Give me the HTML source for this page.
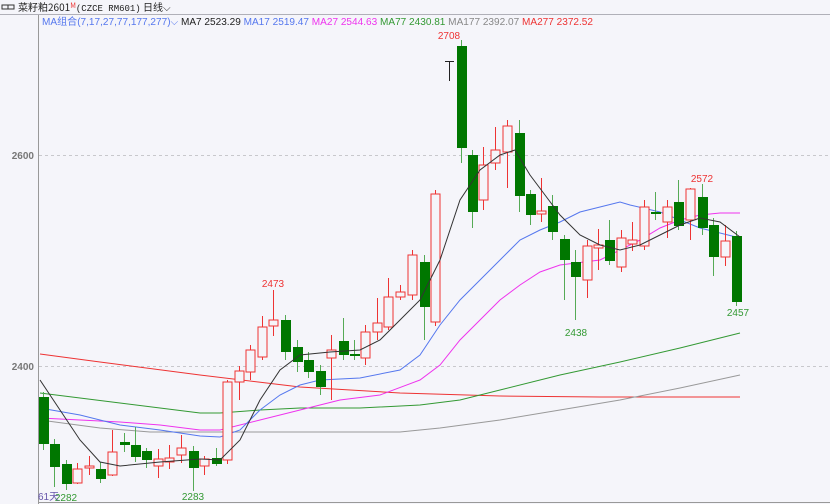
<!DOCTYPE html>
<html><head><meta charset="utf-8"><style>
html,body{margin:0;padding:0;width:830px;height:504px;overflow:hidden;background:#f5f5fa;font-family:"Liberation Sans","Noto Sans CJK SC",sans-serif}
</style></head><body>
<svg id="s" width="830" height="504" xmlns="http://www.w3.org/2000/svg" style="position:absolute;left:0;top:0">
<rect x="0" y="0" width="830" height="504" fill="#f5f5fa"/>
<line x1="0" y1="14.5" x2="830" y2="14.5" stroke="#b0b0b8" stroke-width="1"/>
<rect x="2" y="5" width="6" height="4" fill="none" stroke="#333"/><rect x="8" y="5" width="6" height="4" fill="none" stroke="#333"/>
<text x="18" y="11" font-size="10" fill="#222" font-family="'Noto Sans CJK SC',sans-serif">菜籽粕2601<tspan fill="#e33" font-size="7" dy="-3">M</tspan><tspan dy="3" font-family="'Liberation Mono',monospace" font-size="9">(CZCE RM601)</tspan> 日线⌵</text>
<line x1="38.5" y1="15" x2="38.5" y2="504" stroke="#999" stroke-width="1"/>
<line x1="38" y1="502.5" x2="830" y2="502.5" stroke="#999" stroke-width="1"/>
<line x1="39" y1="155.5" x2="830" y2="155.5" stroke="#c8c8cc" stroke-dasharray="3,3"/>
<line x1="39" y1="366.5" x2="830" y2="366.5" stroke="#c8c8cc" stroke-dasharray="3,3"/>
<text x="34" y="159" font-size="10" fill="#777" text-anchor="end" font-weight="bold">2600</text>
<text x="34" y="370" font-size="10" fill="#777" text-anchor="end" font-weight="bold">2400</text>
<text x="42" y="25" font-size="10" textLength="551" lengthAdjust="spacingAndGlyphs"><tspan fill="#5577ee">MA组合(7,17,27,77,177,277)⌵ </tspan><tspan fill="#222"> MA7 2523.29 </tspan><tspan fill="#5577ee"> MA17 2519.47 </tspan><tspan fill="#ee33ee"> MA27 2544.63 </tspan><tspan fill="#339933"> MA77 2430.81 </tspan><tspan fill="#888"> MA177 2392.07 </tspan><tspan fill="#ee3333"> MA277 2372.52</tspan></text>
<g id="c"></g>
<text x="449" y="39" font-size="10" fill="#ee3333" text-anchor="middle">2708</text>
<text x="273" y="287" font-size="10" fill="#ee3333" text-anchor="middle">2473</text>
<text x="576" y="336" font-size="10" fill="#339933" text-anchor="middle">2438</text>
<text x="738" y="316" font-size="10" fill="#339933" text-anchor="middle">2457</text>
<text x="702" y="182" font-size="10" fill="#ee3333" text-anchor="middle">2572</text>
<text x="66" y="501" font-size="10" fill="#339933" text-anchor="middle">2282</text>
<text x="193" y="500" font-size="10" fill="#339933" text-anchor="middle">2283</text>
<text x="38" y="500" font-size="10" fill="#6655aa">61天</text>
</svg>
<script>
var d=[
[43,'g',397,444,392,450],[54,'g',444,467,439,487],[66,'g',464,484,460,490],[77,'r',469,483,463,484],[89,'r',466,468,456,475],[100,'g',469,479,462,483],[112,'r',452,475,430,476],[124,'g',442,445,433,452],[135,'g',445,457,427,462],[146,'g',451,460,448,468],[158,'r',459,466,449,478],[169,'r',458,462,445,469],[181,'r',448,455,435,463],[193,'g',451,468,446,491],[204,'r',459,466,456,475],[216,'g',458,464,448,466],[227,'r',382,460,380,464],[239,'r',371,382,366,400],[250,'r',350,372,345,380],[262,'r',327,357,316,360],[273,'r',320,326,290,336],[285,'g',320,352,315,360],[297,'g',347,362,340,372],[308,'g',360,372,352,378],[320,'g',371,387,365,395],[331,'r',350,358,335,400],[343,'g',341,355,318,360],[354,'g',354,356,340,360],[365,'r',332,358,325,365],[377,'r',323,332,298,340],[388,'r',297,327,278,330],[400,'r',292,297,285,300],[412,'r',255,295,250,300],[424,'g',262,307,255,340],[435,'r',194,322,190,326],[449,'k',61,62,61,81],[461,'g',46,148,40,163],[472,'g',155,212,150,228],[483,'r',165,200,147,210],[495,'r',150,163,127,170],[507,'r',126,152,120,188],[519,'g',133,196,120,212],[530,'g',194,215,190,225],[541,'r',211,214,178,222],[552,'g',206,232,195,240],[564,'g',239,260,235,300],[575,'g',262,277,250,320],[587,'r',246,280,240,298],[598,'r',245,248,229,270],[609,'g',240,261,220,265],[621,'r',238,267,230,272],[632,'r',240,244,222,251],[644,'r',207,246,200,250],[655,'g',212,214,192,220],[667,'r',207,222,200,238],[678,'g',202,226,180,230],[690,'r',189,220,188,240],[702,'g',197,228,184,235],[713,'g',225,257,218,276],[725,'r',241,257,225,266],[736,'g',236,302,231,306]];
var h='';
function pl(p,c,w){var s='';for(var i=0;i<p.length;i+=2)s+=p[i]+','+p[i+1]+' ';return '<polyline points="'+s+'" fill="none" stroke="'+c+'" stroke-width="'+(w||1)+'"/>';}
h+=pl([40,354,100,362,200,375,300,387,400,393,500,396,600,397,740,397],'#ee3333');
h+=pl([40,420,100,428,150,432,200,432,260,432,320,432,400,432,440,428,500,420,560,410,620,400,680,388,740,375],'#999');
h+=pl([40,393,80,398,120,403,160,408,200,413,220,413,260,410,300,408,360,408,420,405,460,400,500,390,560,375,620,362,680,348,740,333],'#339933');
h+=pl([40,418,80,420,120,422,160,425,200,430,220,430,260,420,300,410,340,400,380,395,420,380,440,365,460,340,480,320,500,300,520,285,540,272,560,265,600,260,620,250,640,240,660,228,680,220,700,215,720,213,740,213],'#ee33ee');
h+=pl([40,408,80,415,120,425,160,430,200,436,220,437,240,430,260,410,280,395,300,385,320,380,360,378,400,370,420,355,440,325,460,300,480,280,500,260,520,240,540,230,560,222,580,212,600,207,620,202,630,205,660,212,680,220,700,228,720,233,740,238],'#5577ee');
d.forEach(function(c){var x=c[0],col=c[1]=='g'?'#007700':c[1]=='r'?'#ee3333':'#222';
h+='<line x1="'+(x+.5)+'" y1="'+c[4]+'" x2="'+(x+.5)+'" y2="'+c[5]+'" stroke="'+(c[1]=='g'?'#55aa55':col)+'" stroke-width="1"/>';
if(c[1]=='k'){h+='<line x1="'+(x-4)+'" y1="'+(c[2]+.5)+'" x2="'+(x+5)+'" y2="'+(c[2]+.5)+'" stroke="#222"/>';return;}
var hh=Math.max(2,c[3]-c[2]);
if(c[1]=='g')h+='<rect x="'+(x-4)+'" y="'+c[2]+'" width="10" height="'+hh+'" fill="#007700"/>';
else h+='<rect x="'+(x-4)+'" y="'+c[2]+'" width="9" height="'+hh+'" fill="#f5f5fa" stroke="#ee3333" stroke-width="1"/>';});
h+=pl([40,380,60,410,80,440,100,462,120,466,160,462,200,459,220,460,240,440,260,400,280,370,300,355,330,352,360,350,380,340,400,320,420,300,440,260,460,200,480,170,500,155,515,150,530,175,545,195,560,215,580,235,600,245,620,250,640,245,660,235,680,225,700,218,720,222,740,237],'#333');
document.getElementById('c').innerHTML=h;
</script>
</body></html>
